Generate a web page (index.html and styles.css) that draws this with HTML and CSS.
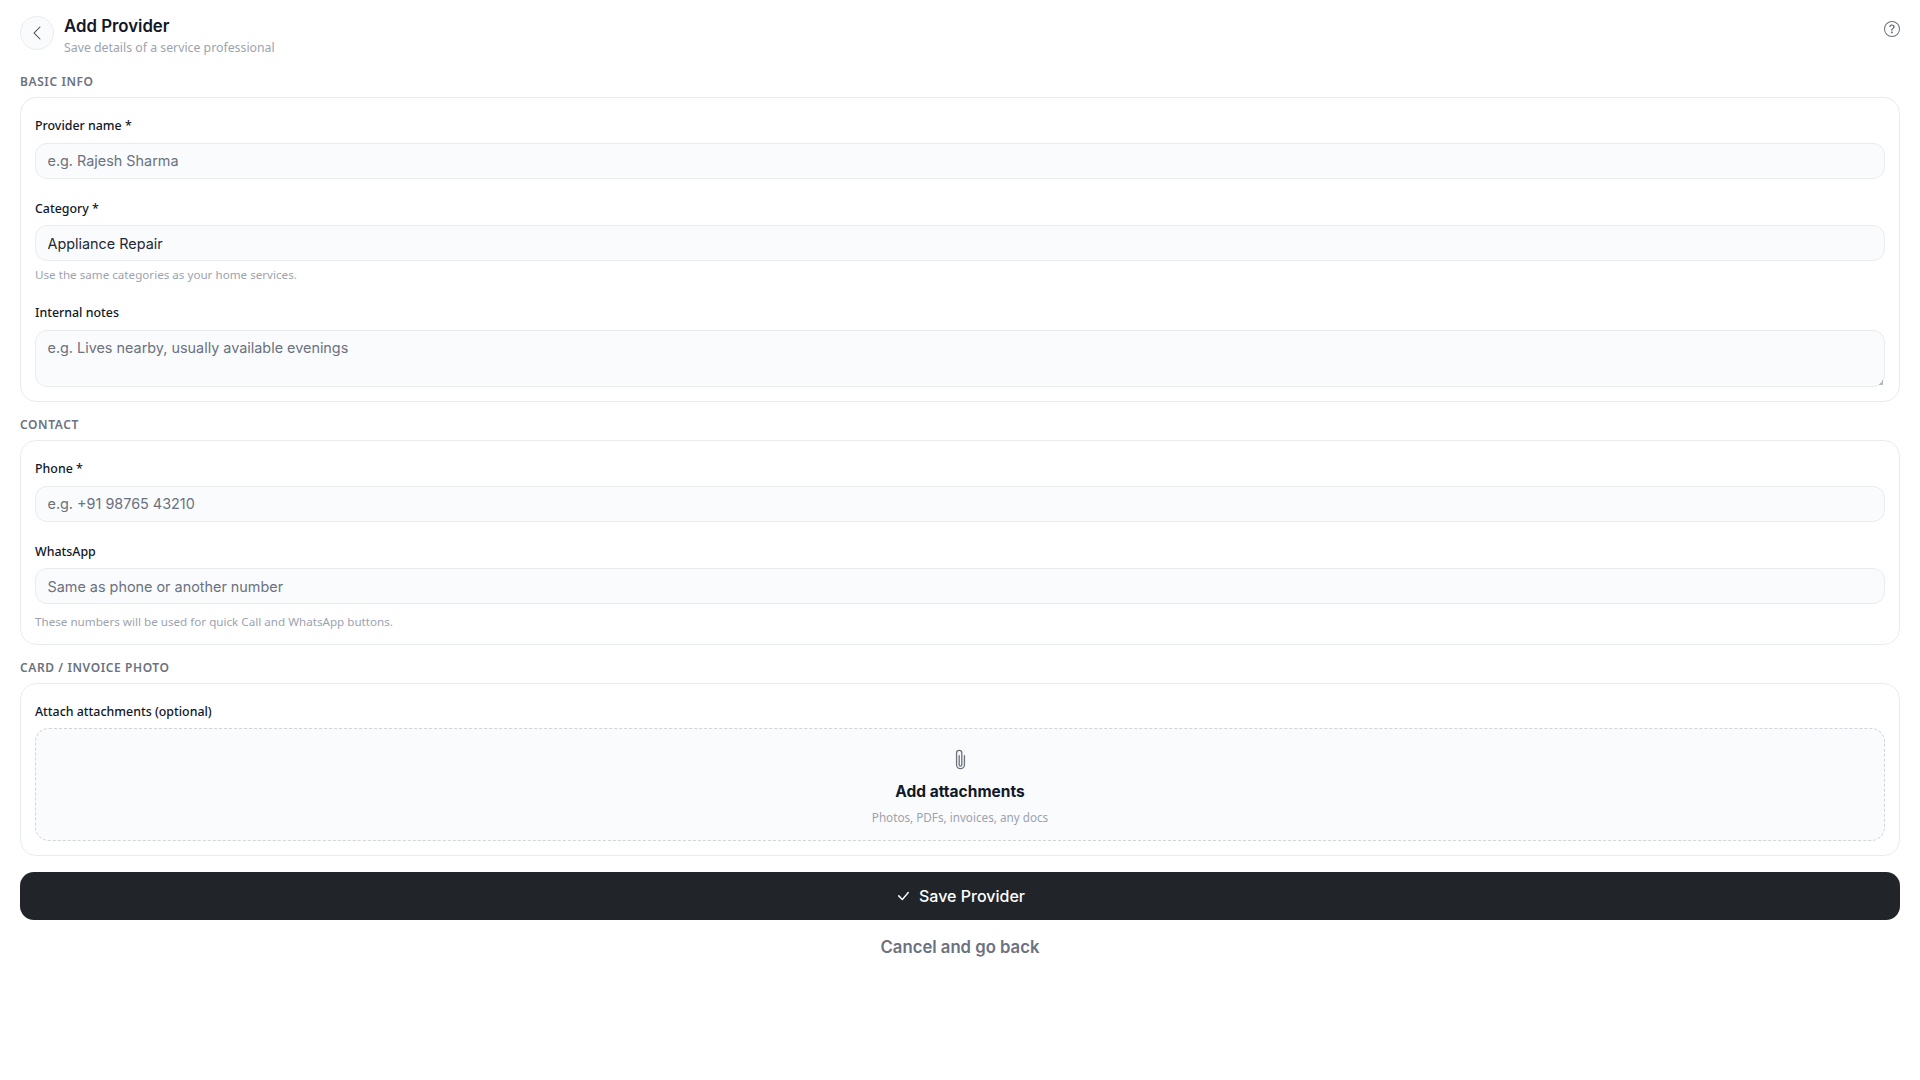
FILE: index.html
```html
<!DOCTYPE html>
<html lang="en">

<head>
    <meta charset="UTF-8">
    <meta name="viewport" content="width=device-width, initial-scale=1.0">
    <title>Add Provider</title>
    <link rel="stylesheet" href="styles.css">
</head>

<body>
    <!-- Header -->
    <header class="top">
        <button class="back" type="button" aria-label="Back">
            <svg viewBox="0 0 16 16" width="16" height="16" fill="currentColor">
                <path d="M11.354 1.646a.5.5 0 0 1 0 .708L5.707 8l5.647 5.646a.5.5 0 0 1-.708.708l-6-6a.5.5 0 0 1 0-.708l6-6a.5.5 0 0 1 .708 0" />
            </svg>
        </button>
        <div class="top-text">
            <h1>Add Provider</h1>
            <p>Save details of a service professional</p>
        </div>
        <button class="help" type="button" aria-label="Help">
            <svg viewBox="0 0 16 16" width="16" height="16" fill="currentColor">
                <path d="M8 15A7 7 0 1 1 8 1a7 7 0 0 1 0 14m0 1A8 8 0 1 0 8 0a8 8 0 0 0 0 16" />
                <path d="M5.255 5.786a.237.237 0 0 0 .241.247h.825c.138 0 .248-.113.266-.25.09-.656.54-1.134 1.342-1.134.686 0 1.314.343 1.314 1.168 0 .635-.374.927-.965 1.371-.673.489-1.206 1.06-1.168 1.987l.003.217a.25.25 0 0 0 .25.246h.811a.25.25 0 0 0 .25-.25v-.105c0-.718.273-.927 1.01-1.486.609-.463 1.244-.977 1.244-2.056 0-1.511-1.276-2.241-2.673-2.241-1.267 0-2.655.59-2.75 2.286m1.557 5.763c0 .533.425.927 1.01.927.609 0 1.028-.394 1.028-.927 0-.552-.42-.94-1.029-.94-.584 0-1.009.388-1.009.94" />
            </svg>
        </button>
    </header>

    <!-- Basic info -->
    <h2 class="section-title">BASIC INFO</h2>
    <section class="card">
        <div class="field">
            <label for="name">Provider name *</label>
            <input type="text" id="name" placeholder="e.g. Rajesh Sharma">
        </div>
        <div class="field">
            <label for="category">Category *</label>
            <input type="text" id="category" value="Appliance Repair">
            <div class="hint">Use the same categories as your home services.</div>
        </div>
        <div class="field">
            <label for="notes">Internal notes</label>
            <textarea id="notes" placeholder="e.g. Lives nearby, usually available evenings"></textarea>
        </div>
    </section>

    <!-- Contact -->
    <h2 class="section-title">CONTACT</h2>
    <section class="card">
        <div class="field">
            <label for="phone">Phone *</label>
            <input type="text" id="phone" placeholder="e.g. +91 98765 43210">
        </div>
        <div class="field">
            <label for="whatsapp">WhatsApp</label>
            <input type="text" id="whatsapp" placeholder="Same as phone or another number">
            <div class="hint hint-low">These numbers will be used for quick Call and WhatsApp buttons.</div>
        </div>
    </section>

    <!-- Attachments -->
    <h2 class="section-title">CARD / INVOICE PHOTO</h2>
    <section class="card">
        <div class="field field-drop">
            <label>Attach attachments (optional)</label>
            <div class="drop">
                <svg class="clip" viewBox="0 0 16 16" width="21" height="21" fill="currentColor">
                    <path d="M4.5 3a2.5 2.5 0 0 1 5 0v9a1.5 1.5 0 0 1-3 0V5a.5.5 0 0 1 1 0v7a.5.5 0 0 0 1 0V3a1.5 1.5 0 1 0-3 0v9a2.5 2.5 0 0 0 5 0V5a.5.5 0 0 1 1 0v7a3.5 3.5 0 1 1-7 0z" />
                </svg>
                <div class="drop-title">Add attachments</div>
                <div class="drop-sub">Photos, PDFs, invoices, any docs</div>
            </div>
        </div>
    </section>

    <button class="save" type="button">
        <svg viewBox="0 0 16 16" width="16" height="16" fill="currentColor">
            <path d="M12.736 3.97a.733.733 0 0 1 1.047 0c.286.289.29.756.01 1.05L7.88 12.01a.733.733 0 0 1-1.065.02L3.217 8.384a.757.757 0 0 1 0-1.06.733.733 0 0 1 1.047 0l3.052 3.093 5.395-6.42z" />
        </svg>
        Save Provider
    </button>
    <button class="cancel" type="button">Cancel and go back</button>
</body>

</html>
```

FILE: styles.css
```css
* {
    box-sizing: border-box;
}

body {
    margin: 0;
    padding: 15px 20px 0;
    background-color: #fff;
    color: #111827;
    font-family: "Noto Sans", sans-serif;
}

.top {
    display: flex;
    align-items: flex-start;
    gap: 10px;
    height: 59px;
}

.back {
    width: 34px;
    height: 34px;
    margin-top: 1px;
    flex-shrink: 0;
    display: flex;
    align-items: center;
    justify-content: center;
    padding: 0;
    border: 1px solid #e9ecef;
    border-radius: 50%;
    background-color: #fafbfc;
    color: #374151;
}

.top-text {
    flex: 1;
}

.top-text h1 {
    margin: 0;
    font-family: Inter, sans-serif;
    font-size: 16.8px;
    font-weight: 600;
    line-height: 22px;
}

.top-text p {
    margin: 2px 0 0;
    font-size: 12.3px;
    line-height: 18px;
    color: #9ca3af;
}

.help {
    padding: 0;
    margin: 6px 0 0;
    border: none;
    background: none;
    color: #6b7280;
    display: flex;
}

.section-title {
    margin: 0 0 7px;
    font-size: 12px;
    font-weight: 600;
    line-height: 16px;
    letter-spacing: 0.6px;
    color: #6b7280;
}

.card {
    display: flex;
    flex-direction: column;
    gap: 16px;
    padding: 14px;
    margin-bottom: 15px;
    border: 1px solid #e9ecef;
    border-radius: 16px;
    background-color: #fff;
}

.field label {
    display: block;
    margin: 5px 0 8.5px;
    font-size: 12.4px;
    font-weight: 500;
    line-height: 17px;
    color: #111827;
}

.field-drop label {
    margin-bottom: 8px;
}

.field input,
.field textarea {
    display: block;
    width: 100%;
    height: 36px;
    padding: 0 12px 0 11.5px;
    border: 1px solid #e9ecef;
    border-radius: 12px;
    outline: none;
    background-color: #fafbfc;
    color: #1f2937;
    font-family: Inter, sans-serif;
    font-size: 14.4px;
}

.field textarea {
    height: 57.5px;
    padding: 8px 12px 9px 11.5px;
    line-height: 18px;
    resize: vertical;
}

.field textarea::-webkit-resizer {
    background: linear-gradient(135deg, transparent 50%, #b5b9c0 50%) no-repeat right 1px bottom 1px / 5px 5px;
}

.field ::placeholder {
    color: #6b7280;
    opacity: 1;
}

.hint {
    margin: 6px 0 0;
    font-size: 11.65px;
    line-height: 16px;
    color: #9ca3af;
}

.hint-low {
    margin-top: 10px;
}

.drop {
    display: flex;
    flex-direction: column;
    align-items: center;
    height: 113px;
    padding-top: 20px;
    border: 1px dashed #d1d5db;
    border-radius: 14px;
    background-color: #fafbfc;
}

.clip {
    color: #6b7280;
}

.drop-title {
    margin-top: 12px;
    font-family: Inter, sans-serif;
    font-size: 15.5px;
    font-weight: 700;
    line-height: 20px;
}

.drop-sub {
    margin-top: 6.5px;
    font-size: 11.7px;
    line-height: 16px;
    color: #9ca3af;
}

.save {
    display: flex;
    align-items: center;
    justify-content: center;
    gap: 8px;
    width: 100%;
    height: 48px;
    margin-top: 16px;
    border: none;
    border-radius: 14px;
    background-color: #212529;
    color: #fff;
    font-family: Inter, sans-serif;
    font-size: 16px;
    font-weight: 500;
}

.cancel {
    display: block;
    width: 100%;
    margin-top: 17px;
    padding: 0;
    border: none;
    background: none;
    color: #6b7280;
    font-family: Inter, sans-serif;
    font-size: 16.7px;
    font-weight: 600;
    line-height: 20px;
}
```
